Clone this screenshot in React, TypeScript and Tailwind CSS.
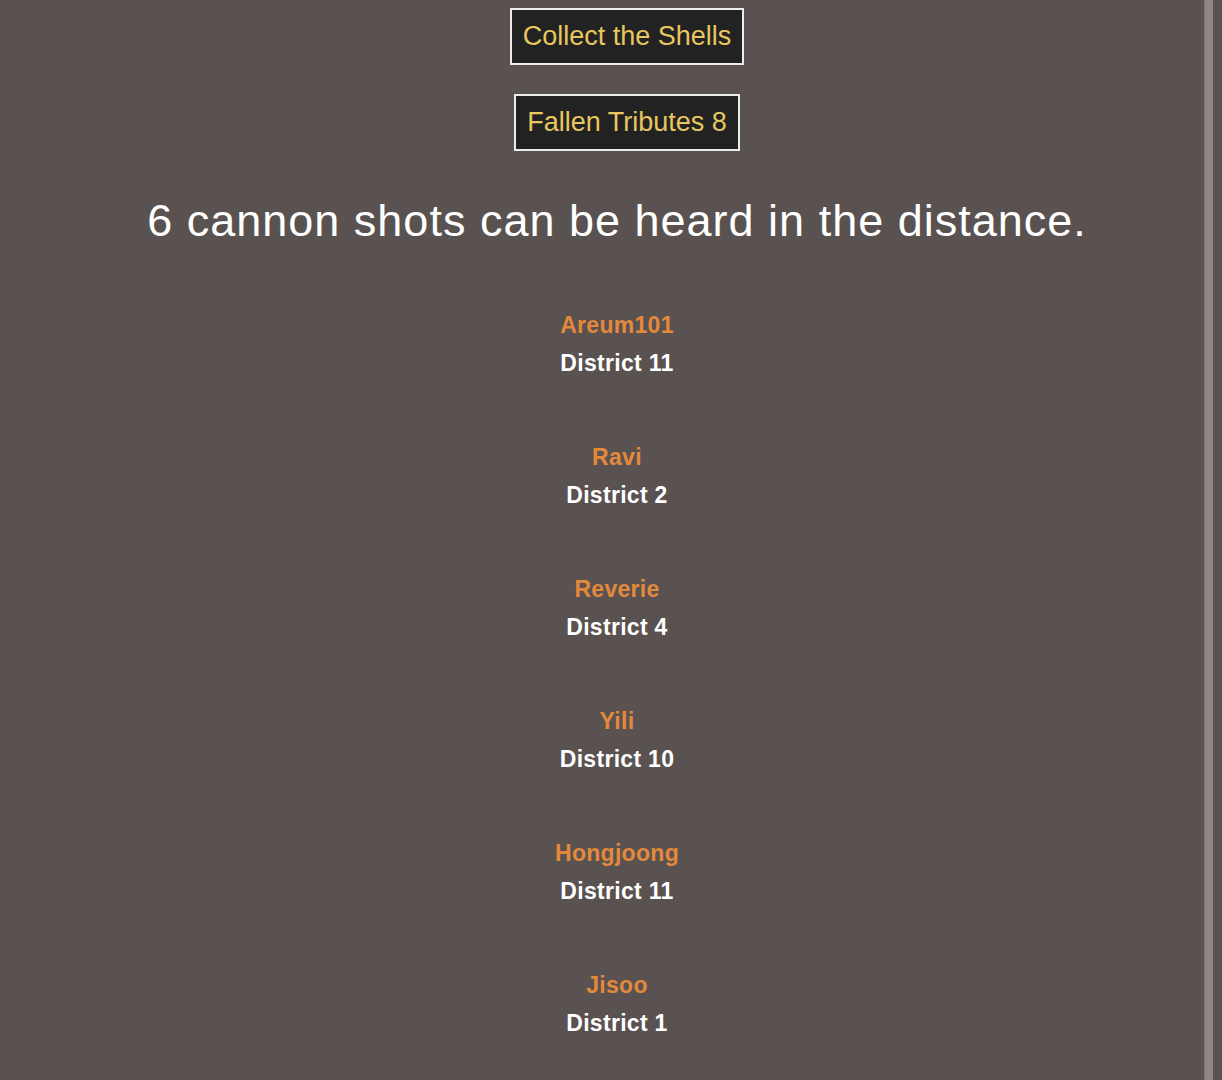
import React from 'react';

const fallen = [
  { name: 'Areum101', district: 'District 11' },
  { name: 'Ravi', district: 'District 2' },
  { name: 'Reverie', district: 'District 4' },
  { name: 'Yili', district: 'District 10' },
  { name: 'Hongjoong', district: 'District 11' },
  { name: 'Jisoo', district: 'District 1' },
];

const ShellButton: React.FC<{ label: string }> = ({ label }) => (
  <div className="ml-[20px] inline-block border-2 border-[#ececec] bg-[#222222] px-[11px] py-[10px] text-[27px] leading-[33px] text-[#e8c660]">
    {label}
  </div>
);

export default function App() {
  return (
    <div
      className="flex min-h-screen w-full bg-[#5a5251]"
      style={{ fontFamily: '"Liberation Sans", Arial, Helvetica, sans-serif' }}
    >
      <main className="flex flex-1 flex-col items-center pl-[30px] pt-[8px]">
        <ShellButton label="Collect the Shells" />
        <div className="mt-[29px]">
          <ShellButton label="Fallen Tributes 8" />
        </div>

        <h1 className="mt-[44px] text-[45px] leading-[52px] tracking-[1px] text-white">
          6 cannon shots can be heard in the distance.
        </h1>

        {/* fallen tribute list */}
        <ul className="mt-[59px] flex flex-col items-center gap-[56px]">
          {fallen.map((t, i) => (
            <li key={i} className="flex flex-col items-center text-[23px] font-bold leading-[38px] tracking-[0.3px]">
              <span className="text-[#e3893c]">{t.name}</span>
              <span className="text-white">{t.district}</span>
            </li>
          ))}
        </ul>
      </main>

      <div className="flex w-[18px] shrink-0">
        <div className="w-[9px] border-l border-[#7c7475] bg-[#8d8586]" />
      </div>
    </div>
  );
}
